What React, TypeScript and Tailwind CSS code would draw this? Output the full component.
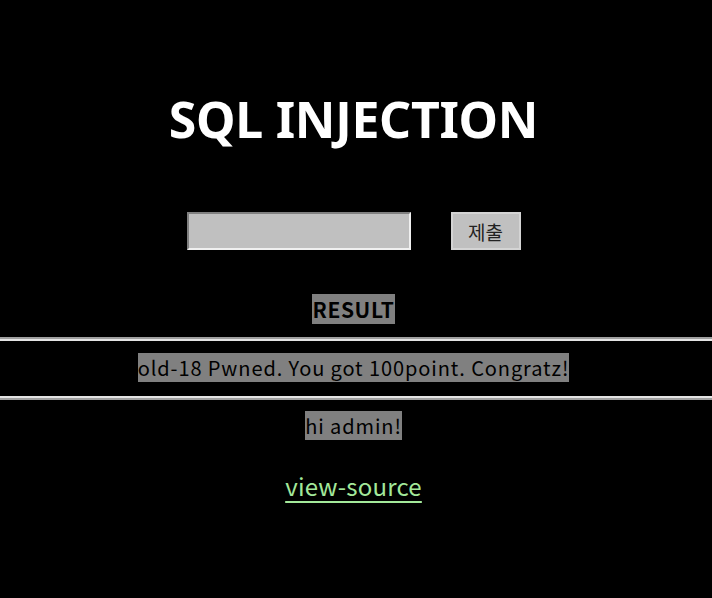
export default function App() {
  return (
    <div className="min-h-[598px] w-full bg-black text-center font-['Noto_Sans_CJK_KR','Noto_Sans',sans-serif] text-white">
      <div className="pr-[5px] pt-[84px]">
        <h1 className="font-['Noto_Sans','Open_Sans',sans-serif] text-[50px] font-bold leading-[70px] tracking-[-0.3px]">
          SQL INJECTION
        </h1>
      </div>

      <form
        className="mt-[58px] flex items-center justify-center gap-[40px] pr-[5px]"
        onSubmit={(e) => e.preventDefault()}
      >
        <input
          type="text"
          className="h-[38px] w-[224px] border-2 border-b-[#f0f0f0] border-l-[#808080] border-r-[#f0f0f0] border-t-[#808080] bg-[#c0c0c0] px-1 text-[18px] text-black outline-none"
        />
        <button
          type="submit"
          className="h-[38px] w-[70px] border-2 border-[#d4d4d4] bg-[#c0c0c0] text-[19px] leading-none text-[#222]"
        >
          제출
        </button>
      </form>

      <div className="mt-[44px] pr-[5px] leading-[30px]">
        <span className="bg-[#808080] text-[21px] font-bold tracking-[0.6px] text-black">RESULT</span>
      </div>

      <hr className="mt-[11px] border-0 border-b-2 border-t-2 border-b-[#e4e4e4] border-t-[#a0a0a0]" />

      <div className="mt-[12px] pr-[5px] leading-[30px]">
        <span className="bg-[#808080] text-[20px] tracking-[0.9px] text-black">
          old-18 Pwned. You got 100point. Congratz!
        </span>
      </div>

      <hr className="mt-[12px] border-0 border-b-2 border-t-2 border-b-[#a0a0a0] border-t-[#e4e4e4]" />

      <div className="mt-[11px] pr-[5px] leading-[30px]">
        <span className="bg-[#808080] text-[20px] tracking-[0.9px] text-black">hi admin!</span>
      </div>

      <div className="mt-[26px] pr-[5px]">
        <a
          href="#"
          className="text-[24px] tracking-[0.2px] text-[#a3e89a] underline decoration-2 underline-offset-[5px]"
        >
          view-source
        </a>
      </div>
    </div>
  );
}
